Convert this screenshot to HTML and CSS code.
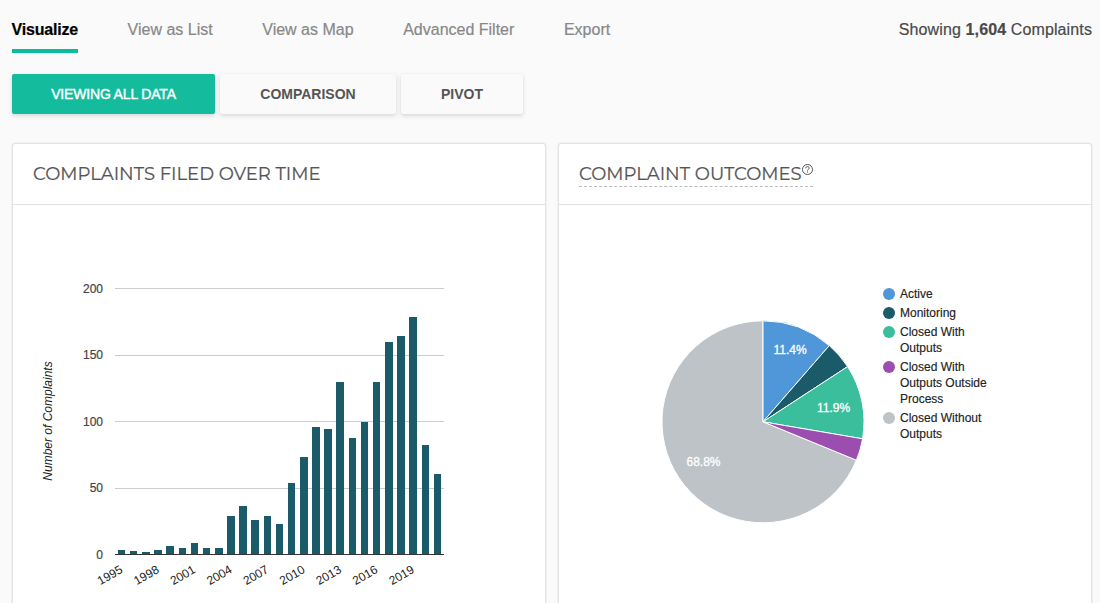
FILE: index.html
```html
<!DOCTYPE html>
<html lang="en">
<head>
  <meta charset="UTF-8">
  <meta name="viewport" content="width=device-width, initial-scale=1">
  <title>Complaints</title>
  <link rel="stylesheet" href="styles.css">
</head>
<body>
  <header class="topbar">
    <nav class="tabs">
      <a class="tab active">Visualize</a>
      <a class="tab">View as List</a>
      <a class="tab">View as Map</a>
      <a class="tab">Advanced Filter</a>
      <a class="tab">Export</a>
    </nav>
    <div class="count">Showing <b>1,604</b> Complaints</div>
  </header>

  <div class="modes">
    <button class="mode selected">VIEWING ALL DATA</button>
    <button class="mode comparison">COMPARISON</button>
    <button class="mode pivot">PIVOT</button>
  </div>

  <main class="cards">
    <section class="card">
      <div class="card-header">
        <h2>COMPLAINTS FILED OVER TIME</h2>
      </div>
      <svg class="chart" width="532" height="420" viewBox="0 0 532 420">
        <g transform="translate(102 83)">
          <g class="grid">
            <rect y="0" width="329" height="1"/>
            <rect y="67" width="329" height="1"/>
            <rect y="133" width="329" height="1"/>
            <rect y="200" width="329" height="1"/>
          </g>
          <g class="bars" id="bars"></g>
          <rect class="baseline" y="266" width="329" height="1"/>
          <g class="y-labels">
            <text x="-12" y="5">200</text>
            <text x="-12" y="71">150</text>
            <text x="-12" y="138">100</text>
            <text x="-12" y="204">50</text>
            <text x="-12" y="271">0</text>
          </g>
          <text class="axis-title" transform="translate(-63 133) rotate(-90)">Number of Complaints</text>
          <g class="x-labels" id="years"></g>
        </g>
      </svg>
    </section>

    <section class="card">
      <div class="card-header">
        <h2 class="title-outcomes">COMPLAINT OUTCOMES<svg class="help" width="11" height="11" viewBox="0 0 11 11"><circle cx="5.5" cy="5.5" r="5"/><path d="M3.7 4.3C3.7 2.1 7.3 2.2 7.3 4.1C7.3 5.3 5.5 5.2 5.5 6.6M5.5 7.5V8.6"/></svg></h2>
      </div>
      <div class="outcomes">
        <svg class="chart" width="316" height="420" viewBox="0 0 316 420">
          <g class="pie" transform="translate(204 216.8)">
            <path fill="#bdc3c7" d="M0 0L93.4 38.4A101 101 0 1 1 0 -101Z"/>
            <path fill="#4f97d8" d="M0 0V-101A101 101 0 0 1 66.3 -76.2Z"/>
            <path fill="#1b5a69" d="M0 0L66.3 -76.2A101 101 0 0 1 84.6 -55.2Z"/>
            <path fill="#3abe9c" d="M0 0L84.6 -55.2A101 101 0 0 1 99.6 17Z"/>
            <path fill="#9b4db0" d="M0 0L99.6 17A101 101 0 0 1 93.4 38.4Z"/>
            <text x="27" y="-68">11.4%</text>
            <text x="70.5" y="-10">11.9%</text>
            <text x="-59.5" y="44">68.8%</text>
          </g>
        </svg>
        <ul class="legend">
          <li class="active-item">Active</li>
          <li class="monitoring">Monitoring</li>
          <li class="with-outputs">Closed With Outputs</li>
          <li class="outside">Closed With Outputs Outside Process</li>
          <li class="without">Closed Without Outputs</li>
        </ul>
      </div>
    </section>
  </main>

  <script src="script.js"></script>
</body>
</html>
```
FILE: styles.css
```css
* {
  box-sizing: border-box;
}
body {
  margin: 0;
  padding: 0 8px 0 12px;
  height: 603px;
  overflow: hidden;
  background: #fafafa;
  font-family: "Liberation Sans", Arial, sans-serif;
  color: #4a4a4a;
}
.topbar {
  display: flex;
  justify-content: space-between;
  height: 53px;
  padding-top: 20px;
  font-size: 16px;
  line-height: 20px;
}
.count {
  letter-spacing: 0.12px;
  -webkit-text-stroke: 0.2px #4a4a4a;
}
.tabs {
  display: flex;
  gap: 49.6px;
}
.tab {
  height: 33px;
  color: #888;
  white-space: nowrap;
  -webkit-text-stroke: 0.2px #888;
}
.tab.active {
  width: 66px;
  color: #000;
  font-weight: bold;
  letter-spacing: -0.2px;
  text-indent: -0.5px;
  -webkit-text-stroke: 0.2px #000;
  border-bottom: 4px solid #09bc9c;
}
.modes {
  display: flex;
  gap: 5px;
  margin-top: 21px;
}
.mode {
  height: 40px;
  padding: 0;
  border: none;
  border-radius: 2px;
  background: #fafafa;
  color: #555;
  font: bold 14px/40px "Liberation Sans", Arial, sans-serif;
  box-shadow: 0 2px 4px rgba(50,50,93,0.16), 0 0 2px rgba(0,0,0,0.06);
}
.mode.selected {
  width: 203px;
  background: #14bb9d;
  color: white;
  font-weight: normal;
  letter-spacing: -0.17px;
  -webkit-text-stroke: 0.4px white;
}
.comparison {
  width: 176px;
}
.pivot {
  width: 122px;
}
.cards {
  display: grid;
  grid-template-columns: 534px 534px;
  gap: 12px;
  margin-top: 29px;
}
.card {
  height: 480px;
  background: white;
  border: 1px solid #e3e3e3;
  border-radius: 3px;
  box-shadow: 0 0 2px rgba(0,0,0,0.12);
}
.card-header {
  height: 61px;
  padding: 17px 20px 0;
  border-bottom: 1px solid #e1e1e1;
}
h2 {
  display: inline-block;
  margin: 0;
  height: 26px;
  font: 18px/26px Montserrat, Lato, sans-serif;
  color: #555;
  white-space: nowrap;
  -webkit-text-stroke: 0.2px #555;
}
.title-outcomes {
  border-bottom: 1px dashed #bbb;
}
.help {
  vertical-align: 5px;
  fill: none;
  stroke: #555;
  stroke-width: 1;
}
.chart {
  display: block;
}
.grid {
  fill: #ccc;
}
.bars {
  fill: #1b5a69;
}
.baseline {
  fill: #333;
}
.y-labels {
  font-size: 12px;
  fill: #444;
  stroke: #444;
  stroke-width: 0.2;
  text-anchor: end;
}
.x-labels {
  font-size: 12px;
  fill: #222;
  text-anchor: end;
}
.axis-title {
  font-size: 12px;
  font-style: italic;
  fill: #222;
  text-anchor: middle;
}
.outcomes {
  display: flex;
}
.pie path {
  stroke: white;
  stroke-width: 1;
}
.pie text {
  font-size: 12px;
  fill: white;
  stroke: white;
  stroke-width: 0.3;
  text-anchor: middle;
}
.legend {
  list-style: none;
  width: 120px;
  margin: 81px 0 0 8px;
  padding: 0;
  font-size: 12px;
  line-height: 16px;
  color: #222;
  -webkit-text-stroke: 0.15px #222;
}
.legend li {
  position: relative;
  padding-left: 17px;
  margin-bottom: 3px;
}
.legend li::before {
  content: "";
  position: absolute;
  left: 0;
  top: 2px;
  width: 12px;
  height: 12px;
  border-radius: 50%;
}
.active-item::before {
  background: #4f97d8;
}
.monitoring::before {
  background: #1b5a69;
}
.with-outputs::before {
  background: #3abe9c;
}
.outside::before {
  background: #9b4db0;
}
.without::before {
  background: #bdc3c7;
}
```
FILE: script.js
```js
const SVG = 'http://www.w3.org/2000/svg';

// x, width, height of each column, one per year from 1995
const columns = [
  [3, 7, 4], [15, 7, 3], [27, 8, 2], [39, 8, 4], [51, 8, 8], [64, 7, 6],
  [76, 7, 11], [88, 7, 6], [100, 8, 6], [112, 8, 38], [124, 8, 48], [136, 8, 34],
  [149, 7, 38], [161, 7, 30], [173, 7, 71], [185, 8, 97], [197, 8, 127], [209, 8, 125],
  [221, 8, 172], [234, 7, 116], [246, 7, 132], [258, 7, 172], [270, 8, 212], [282, 8, 218],
  [294, 8, 237], [307, 7, 109], [319, 7, 80]
];

columns.forEach(([x, width, height], i) => {
  const bar = document.createElementNS(SVG, 'rect');
  bar.setAttribute('x', x);
  bar.setAttribute('y', 266 - height);
  bar.setAttribute('width', width);
  bar.setAttribute('height', height);
  document.getElementById('bars').appendChild(bar);

  // every third year gets a label
  if (i % 3 === 0 && i < 25) {
    const label = document.createElementNS(SVG, 'text');
    label.setAttribute('transform', `translate(${8.5 + i * 12.15} 284) rotate(-30)`);
    label.textContent = 1995 + i;
    document.getElementById('years').appendChild(label);
  }
});
```
